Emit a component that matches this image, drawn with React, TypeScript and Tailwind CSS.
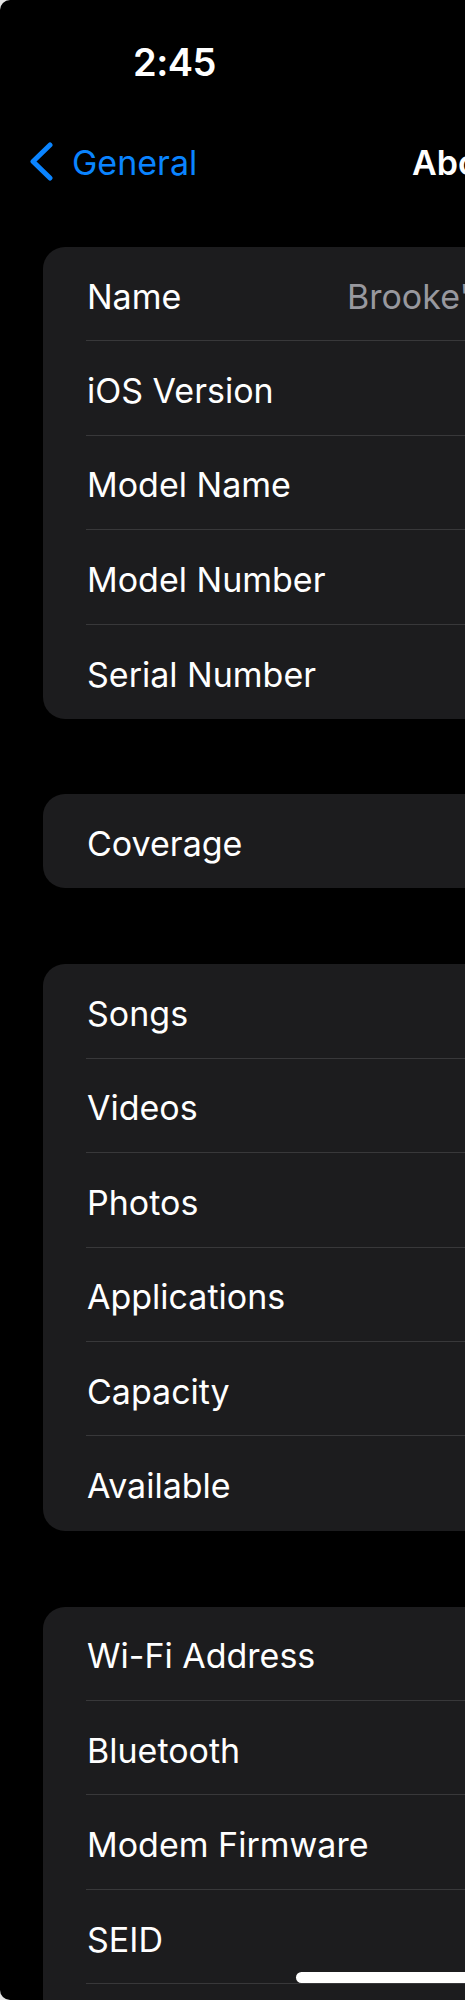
const sections: { label: string; value?: string }[][] = [
  [
    { label: 'Name', value: "Brooke's iPad" },
    { label: 'iOS Version' },
    { label: 'Model Name' },
    { label: 'Model Number' },
    { label: 'Serial Number' },
  ],
  [{ label: 'Coverage' }],
  [
    { label: 'Songs' },
    { label: 'Videos' },
    { label: 'Photos' },
    { label: 'Applications' },
    { label: 'Capacity' },
    { label: 'Available' },
  ],
  [
    { label: 'Wi-Fi Address' },
    { label: 'Bluetooth' },
    { label: 'Modem Firmware' },
    { label: 'SEID' },
  ],
]

const gaps = ['mt-[65px]', 'mt-[75px]', 'mt-[76px]', 'mt-[76px]']

function Row({ label, value, last }: { label: string; value?: string; last: boolean }) {
  return (
    <div className="pl-[43px]">
      <div
        className={
          'flex h-[94.4px] items-center pl-[1px] pt-[6px] ' +
          (last ? '' : 'border-b border-[#38383a]')
        }
      >
        <span className="w-[260px] shrink-0 whitespace-nowrap text-[34px] leading-none text-white">
          {label}
        </span>
        {value && (
          <span className="whitespace-nowrap text-[34px] leading-none text-[#98989e]">{value}</span>
        )}
      </div>
    </div>
  )
}

export default function App() {
  return (
    <div className="relative h-[2000px] w-[465px] overflow-hidden bg-[#e5e5e5] font-['Inter',sans-serif]">
      <div className="h-full w-[700px] overflow-hidden rounded-l-[10px] bg-black">
        {/* status bar */}
        <div className="pl-[133px] pt-[43px]">
          <div className="h-[39px] text-[38px] font-semibold leading-none tracking-[-0.5px] text-white">2:45</div>
        </div>

        {/* nav bar */}
        <div className="mt-[60px] flex h-[40px] pl-[29px]">
          <div className="flex w-[383px] shrink-0 items-start gap-[19px]">
            <svg width="24" height="39" viewBox="0 0 24 39" fill="none">
              <path
                d="M21 3 L4 19.5 L21 36"
                stroke="#0a84ff"
                strokeWidth="5"
                strokeLinecap="round"
                strokeLinejoin="round"
              />
            </svg>
            <span className="mt-[4px] text-[34px] leading-none text-[#0a84ff]">General</span>
          </div>
          <span className="mt-[4px] whitespace-nowrap text-[34px] font-semibold leading-none text-white">
            About
          </span>
        </div>

        {sections.map((rows, i) => {
          const isLastCard = i === sections.length - 1
          return (
            <div key={i} className={gaps[i] + ' ml-[43px] w-[640px] rounded-[22px] bg-[#1c1c1e]'}>
              {rows.map((r, j) => (
                <Row
                  key={r.label}
                  label={r.label}
                  value={r.value}
                  last={j === rows.length - 1 && !isLastCard}
                />
              ))}
              {/* card keeps going below the fold */}
              {isLastCard && <div className="h-[94px]" />}
            </div>
          )
        })}
      </div>

      {/* home indicator */}
      <div className="absolute left-[296px] top-[1972px] h-[11px] w-[300px] rounded-full bg-white" />
    </div>
  )
}
